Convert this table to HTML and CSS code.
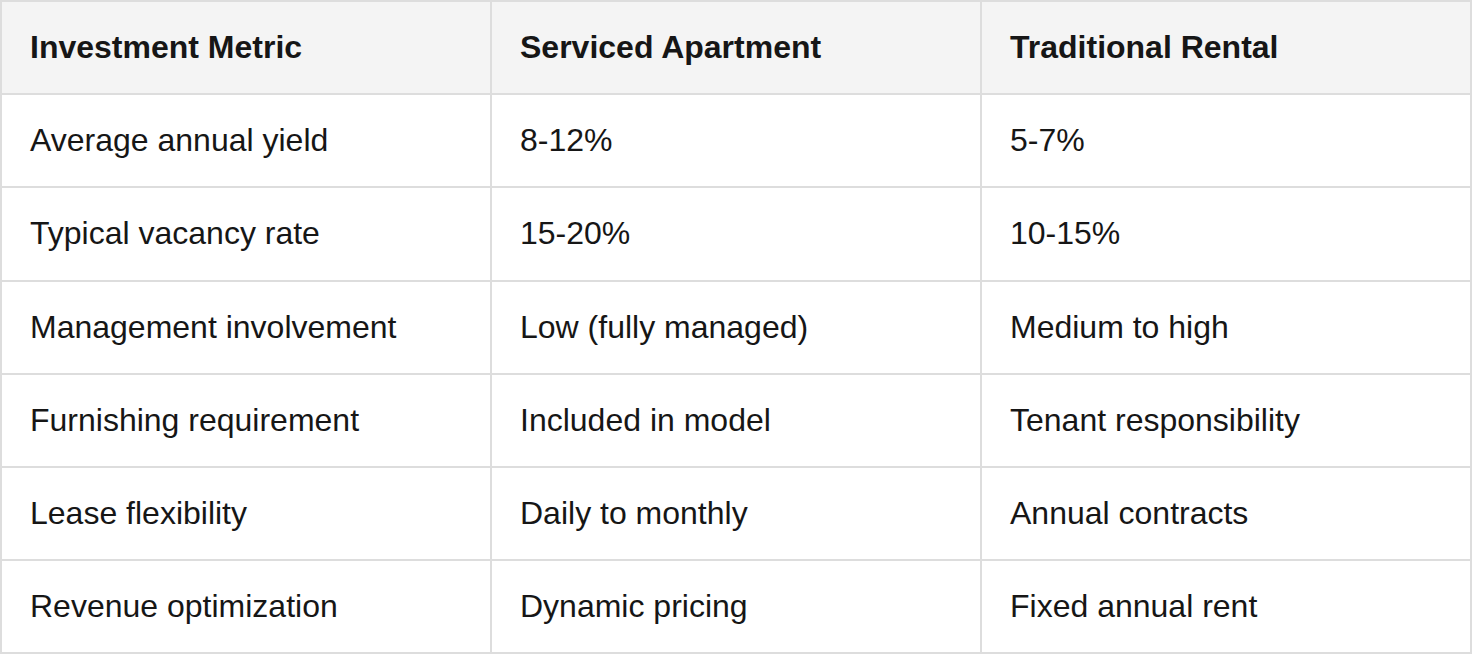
FILE: index.html
```html
<!DOCTYPE html>
<html lang="en">
<head>
<meta charset="utf-8">
<title>Investment comparison</title>
<link rel="stylesheet" href="styles.css">
</head>
<body>
<table class="compare">
  <thead>
    <tr><th>Investment Metric</th><th>Serviced Apartment</th><th>Traditional Rental</th></tr>
  </thead>
  <tbody>
    <tr><td>Average annual yield</td><td>8-12%</td><td>5-7%</td></tr>
    <tr><td>Typical vacancy rate</td><td>15-20%</td><td>10-15%</td></tr>
    <tr><td>Management involvement</td><td>Low (fully managed)</td><td>Medium to high</td></tr>
    <tr><td>Furnishing requirement</td><td>Included in model</td><td>Tenant responsibility</td></tr>
    <tr><td>Lease flexibility</td><td>Daily to monthly</td><td>Annual contracts</td></tr>
    <tr><td>Revenue optimization</td><td>Dynamic pricing</td><td>Fixed annual rent</td></tr>
  </tbody>
</table>
</body>
</html>
```
FILE: styles.css
```css
html, body {
  margin: 0;
  padding: 0;
  background: #ffffff;
}
body {
  font-family: "Liberation Sans", Arial, sans-serif;
  color: #161616;
}
.compare {
  width: 1472px;
  border-collapse: collapse;
  table-layout: fixed;
  font-size: 32px;
}
.compare th,
.compare td {
  border: 2px solid #dddddd;
  padding: 27px 28px;
  line-height: 37.2px;
  text-align: left;
  vertical-align: top;
}
.compare th {
  background: #f4f4f4;
  font-weight: bold;
}
```
